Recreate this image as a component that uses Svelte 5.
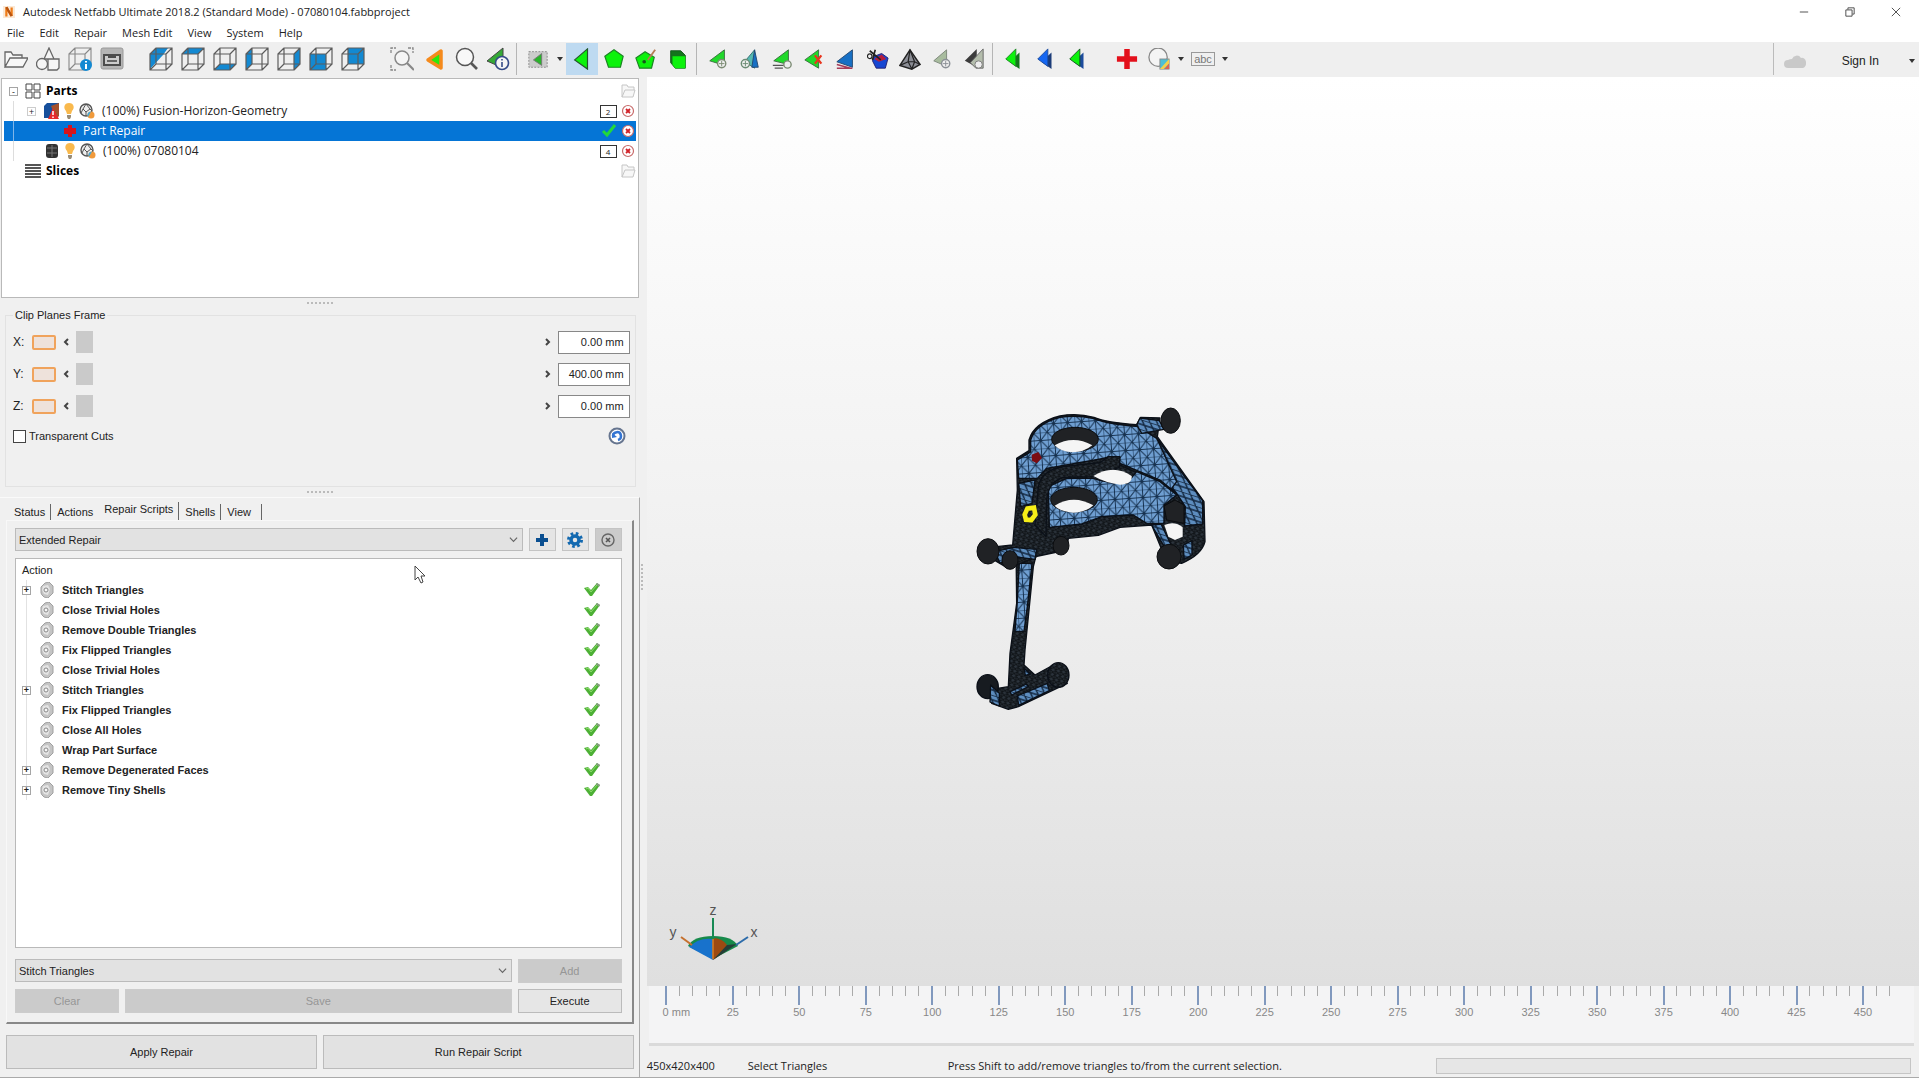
<script>
	let transparentCuts = false;
	let activeTab = "Repair Scripts";

	const menus = ["File", "Edit", "Repair", "Mesh Edit", "View", "System", "Help"];
	const tabs = ["Status", "Actions", "Repair Scripts", "Shells", "View"];

	// toolbar groups, left to right
	const toolbar = [
		["open", "shapes", "info-part", "save"],
		["cube-iso", "cube-top", "cube-bottom", "cube-left", "cube-right", "cube-front", "cube-back"],
		["zoom-fit", "zoom-tri", "zoom", "tri-info"],
		["select-mode"],
		["select-tri", "select-shell", "select-surface", "select-part"],
		["add-node", "add-tri", "add-edge", "remove-tri", "flip", "cut", "wire", "refine", "smooth"],
		["tri-green", "tri-blue", "tri-both"],
		["repair", "color"],
		["label"],
	];
	const withArrow = ["select-mode", "color", "label"];

	const cubeFaces = {
		"cube-iso": "1,22 1,7 7,1 19,1 14,8",
		"cube-top": "1,7 7,1 23,1 17,7",
		"cube-bottom": "1,23 7,17 23,17 17,23",
		"cube-left": "1,7 7,1 7,17 1,23",
		"cube-right": "17,7 23,1 23,17 17,23",
		"cube-front": "1,7 17,7 17,23 1,23",
		"cube-back": "7,1 23,1 23,17 7,17",
	};

	let planes = [
		{ axis: "X", value: "0.00 mm", pos: 0 },
		{ axis: "Y", value: "400.00 mm", pos: 0 },
		{ axis: "Z", value: "0.00 mm", pos: 0 },
	];

	const actions = [
		{ name: "Stitch Triangles", open: true },
		{ name: "Close Trivial Holes" },
		{ name: "Remove Double Triangles" },
		{ name: "Fix Flipped Triangles" },
		{ name: "Close Trivial Holes" },
		{ name: "Stitch Triangles", open: true },
		{ name: "Fix Flipped Triangles" },
		{ name: "Close All Holes" },
		{ name: "Wrap Part Surface" },
		{ name: "Remove Degenerated Faces", open: true },
		{ name: "Remove Tiny Shells", open: true },
	];

	const ticks = Array.from({ length: 93 }, (_, i) => i * 5);
</script>

{#snippet icon(name)}
	<svg class="icon" viewBox="0 0 24 24" aria-hidden="true">
		{#if cubeFaces[name]}
			<polygon points={cubeFaces[name]} fill="#1389d2" />
			<path d="M1 7H17V23H1ZM7 1H23V17H7ZM1 7L7 1M17 7L23 1M17 23L23 17M1 23L7 17" fill="none" stroke="#5c5c5c" stroke-width="1.2" />
		{:else if name === "open"}
			<path d="M1 20V5H7L9 8H18V11M1 20L6 11H24L19 20Z" fill="#f7f7f7" stroke="#666" stroke-width="1.3" />
		{:else if name === "shapes"}
			<path d="M13 1L18 12H8Z M12 12H23V21L21 23H12Z" fill="#f5f5f5" stroke="#666" stroke-width="1.3" />
			<circle cx="6" cy="17" r="5.5" fill="#f5f5f5" stroke="#666" stroke-width="1.3" />
		{:else if name === "info-part"}
			<path d="M1 7H17V23H1ZM7 1H23V17H7ZM1 7L7 1M17 7L23 1M17 23L23 17M1 23L7 17" fill="none" stroke="#888" stroke-width="1.1" />
			<circle cx="18" cy="18" r="6" fill="#1389d2" />
			<path d="M18 14V15.5M18 17V22" stroke="#fff" stroke-width="2" />
		{:else if name === "save"}
			<rect x="1" y="1" width="22" height="21" rx="2" fill="#b5b5b5" stroke="#999" />
			<rect x="3" y="7" width="18" height="12" fill="#4c4c4c" />
			<path d="M5 9H8V11H16V9H19V17H5Z" fill="#ccc" />
			<path d="M7 13H17V15H7Z" fill="#666" />
		{:else if name === "zoom-fit"}
			<path d="M1 6V1H6M18 1H23V6M1 18V23H6" fill="none" stroke="#888" stroke-width="1.3" stroke-dasharray="3 1" />
			<circle cx="12" cy="11" r="7" fill="#f5f5f5" stroke="#888" stroke-width="1.5" />
			<path d="M17 16L24 23" stroke="#888" stroke-width="2.2" />
		{:else if name === "zoom-tri"}
			<path d="M6 13L19 4V21Z" fill="#2be80b" stroke="#f58a1c" stroke-width="3.5" stroke-linejoin="round" />
		{:else if name === "zoom"}
			<circle cx="11" cy="10" r="8.5" fill="#f8f8f8" stroke="#555" stroke-width="1.5" />
			<path d="M17 16L23 22" stroke="#555" stroke-width="2.6" />
		{:else if name === "tri-info"}
			<path d="M1 14L17 1V21Z" fill="#35a936" stroke="#444" />
			<circle cx="16" cy="16" r="6.5" fill="#f5f5f5" stroke="#354b88" stroke-width="1.6" />
			<path d="M16 12V13.5M16 15V20" stroke="#354b88" stroke-width="1.6" />
		{:else if name === "select-mode"}
			<rect x="2" y="4" width="20" height="17" fill="#ccc" stroke="#888" stroke-dasharray="2 1.5" />
			<path d="M7 13L16 6V19Z" fill="#2ab42b" stroke="#777" />
		{:else if name === "select-tri"}
			<path d="M4 13L18 1V23Z" fill="#0cf20c" stroke="#24582a" stroke-width="1.3" />
		{:else if name === "select-shell"}
			<path d="M12 2L22 9L19 21H6L2 9Z" fill="#0cf20c" stroke="#1d8424" stroke-width="1.3" />
		{:else if name === "select-surface"}
			<path d="M11 4L21 10L18 22H5L1 11Z" fill="#0cf20c" stroke="#1d8424" stroke-width="1.3" />
			<circle cx="10" cy="15" r="2" fill="#14561c" />
			<path d="M14 13L22 2" stroke="#b77b54" stroke-width="2" />
		{:else if name === "select-part"}
			<path d="M4 3H15L20 8V22H9L4 16Z" fill="#14751c" stroke="#14561c" />
			<path d="M6 9H20V22H9L6 18Z" fill="#0cf20c" />
		{:else if name === "add-node"}
			<path d="M3 14L19 2V19Z" fill="#20d92a" stroke="#3b6d40" />
			<circle cx="16" cy="17" r="4.5" fill="#eee" stroke="#7b8b73" stroke-width="1.5" />
			<path d="M16 14V20M13 17H19" stroke="#7b8b73" />
		{:else if name === "add-tri"}
			<path d="M6 15L17 2V22Z" fill="#55b9b0" stroke="#356f74" />
			<path d="M17 2L21 21H14Z" fill="#1770c5" stroke="#24476f" />
			<circle cx="7" cy="17" r="4.5" fill="#eee" stroke="#6a8b73" stroke-width="1.5" />
			<path d="M7 14V20M4 17H10" stroke="#6a8b73" />
		{:else if name === "add-edge"}
			<path d="M3 14L19 2V18Z" fill="#20d92a" stroke="#3b6d40" />
			<path d="M2 19H14M4 22H13" stroke="#555" stroke-width="1.5" />
			<circle cx="18" cy="18" r="4" fill="#eee" stroke="#7b8b73" stroke-width="1.5" />
		{:else if name === "remove-tri"}
			<path d="M2 13L17 2V22Z" fill="#20d92a" stroke="#3b6d40" />
			<path d="M13 8L20 17M20 8L13 17" stroke="#e8341c" stroke-width="2.5" />
		{:else if name === "flip"}
			<path d="M2 15L19 2V21Z" fill="#1770c5" stroke="#24476f" />
			<path d="M2 18L17 22M2 22H19" stroke="#a63b58" stroke-width="1.6" />
		{:else if name === "cut"}
			<path d="M8 9L16 6L23 11L20 22H10L6 14Z" fill="#1646d2" stroke="#24206f" />
			<path d="M8 12L16 7L21 12L13 15Z" fill="#b51c3c" />
			<path d="M3 3L15 13M9 2L6 13" stroke="#222" stroke-width="1.8" />
			<circle cx="3" cy="9" r="2.5" fill="none" stroke="#222" stroke-width="1.3" />
		{:else if name === "wire"}
			<path d="M12 2L23 18L14 23L1 19Z" fill="#8b8d95" stroke="#222" stroke-width="1.6" />
			<path d="M12 2L10 15L14 23M12 2L17 15L10 15L1 19M17 15L23 18M17 15L14 23" fill="none" stroke="#222" stroke-width="1.3" />
		{:else if name === "refine"}
			<path d="M3 14L17 2V20Z" fill="#a8bc9e" stroke="#7c8779" />
			<circle cx="16" cy="17" r="4.5" fill="#eee" stroke="#8a8f96" stroke-width="1.5" />
			<path d="M16 14V20M13 17H19" stroke="#8a8f96" />
		{:else if name === "smooth"}
			<path d="M2 14L15 1V21Z" fill="#3c3c3c" />
			<path d="M8 16L22 1V22H14Z" fill="#b4bdac" stroke="#666" />
			<circle cx="17" cy="18" r="4" fill="#eee" stroke="#777" />
		{:else if name === "tri-green"}
			<path d="M7 15L18 5V23Z" fill="#14751c" />
			<path d="M3 12L14 1V20Z" fill="#0cf20c" stroke="#1d8424" />
		{:else if name === "tri-blue"}
			<path d="M7 15L18 5V23Z" fill="#1c3c79" />
			<path d="M3 12L14 1V20Z" fill="#1667f2" stroke="#1c4b9c" />
		{:else if name === "tri-both"}
			<path d="M7 15L18 5V23Z" fill="#1c4b9c" />
			<path d="M3 12L14 1V20Z" fill="#0cf20c" stroke="#14561c" />
		{:else if name === "repair"}
			<path d="M9 1H15V9H23V15H15V23H9V15H1V9H9Z" fill="#e3101b" />
		{:else if name === "color"}
			<circle cx="11" cy="10" r="10" fill="#f4f4f4" stroke="#888" stroke-width="1.4" />
			<rect x="13" y="12" width="10" height="11" fill="#4bbfd5" stroke="#888" />
			<path d="M13 23L23 12V17L17 23Z" fill="#f4cf4a" />
			<path d="M23 17V23H18Z" fill="#e0604f" />
		{/if}
	</svg>
{/snippet}

{#snippet folder()}
	<svg class="icon16" viewBox="0 0 16 16" aria-hidden="true">
		<path d="M2 14V2H7L8 4H14V7M2 14L5 7H15L13 14Z" fill="#f7f7f7" stroke="#c6c6c6" />
	</svg>
{/snippet}

{#snippet closeMark()}
	<svg class="icon16" viewBox="0 0 16 16" aria-hidden="true">
		<circle cx="8" cy="8" r="5.5" fill="#fff" stroke="#c76a6a" stroke-width="1.2" />
		<path d="M6 6L10 10M10 6L6 10" stroke="#d2232a" stroke-width="1.8" />
	</svg>
{/snippet}

{#snippet bulbAndGlobe()}
	<svg class="icon16" viewBox="0 0 16 16" aria-hidden="true">
		<path d="M8 0C3 0 2 5 5 8L6 11H10L11 8C14 5 13 0 8 0Z" fill="#f9b94d" />
		<path d="M6 12H10V14L9 16H7L6 14Z" fill="#998d78" />
	</svg>
	<svg class="icon16" viewBox="0 0 16 16" aria-hidden="true">
		<circle cx="7" cy="7" r="6" fill="#eee" stroke="#555" stroke-width="1.4" />
		<path d="M7 1L4 6L7 9L11 6ZM4 6L2 10M11 6L13 8M7 9V13" fill="none" stroke="#555" />
		<circle cx="12" cy="12" r="3.5" fill="#f09a3c" />
		<path d="M12 8.5A3.5 3.5 0 0 0 9 14Z" fill="#43a7d8" />
	</svg>
{/snippet}

{#snippet chevron()}
	<svg class="chevron" viewBox="0 0 10 10" aria-hidden="true">
		<path d="M1 3L5 7L9 3" fill="none" stroke="#666" stroke-width="1.3" />
	</svg>
{/snippet}

<div class="app">
	<header class="titlebar">
		<svg class="logo" viewBox="0 0 16 16" aria-hidden="true">
			<rect width="16" height="16" fill="#fbe9d6" />
			<path d="M3 14V2L6 1L10 9V2H13V13L10 14L6 7V14Z" fill="#ef7d1a" />
			<path d="M3 2L6 1L13 13L10 14Z" fill="#b95410" />
		</svg>
		<h1>Autodesk Netfabb Ultimate 2018.2 (Standard Mode) - 07080104.fabbproject</h1>
		<div class="window-buttons">
			<button aria-label="Minimize"><svg viewBox="0 0 12 12"><path d="M1 6H11" /></svg></button>
			<button aria-label="Restore"><svg viewBox="0 0 12 12"><path d="M1 3.5H8.5V11H1ZM3.5 3V1H11V8.5H9" /></svg></button>
			<button aria-label="Close"><svg viewBox="0 0 12 12"><path d="M1 1L11 11M11 1L1 11" /></svg></button>
		</div>
	</header>

	<nav class="menubar">
		{#each menus as menu}
			<button>{menu}</button>
		{/each}
	</nav>

	<div class="toolbar">
		{#each toolbar as group, g}
			<div class="group" class:ruled={[3, 5, 6].includes(g)} class:spaced={[1, 2, 7].includes(g)}>
				{#each group as name}
					<button class="tool" class:selected={name === "select-tri"} aria-label={name}>
						{#if name === "label"}
							<span class="abc">abc</span>
						{:else}
							{@render icon(name)}
						{/if}
					</button>
					{#if withArrow.includes(name)}
						<button class="arrow" aria-label="{name} options"></button>
					{/if}
				{/each}
			</div>
		{/each}
		<div class="account">
			<svg class="cloud" viewBox="0 0 22 14" aria-hidden="true">
				<path d="M4 14A4 4 0 0 1 4 6Q6 5 8 5A5 5 0 0 1 17 4A4 5 0 0 1 19 14Z" fill="#c9c9c9" />
			</svg>
			<button class="signin">Sign In</button>
			<button class="arrow" aria-label="Account options"></button>
		</div>
	</div>

	<main>
		<aside>
			<ul class="tree">
				<li>
					<span class="box">-</span>
					<svg class="icon16" viewBox="0 0 16 16" aria-hidden="true">
						<path d="M1 1H7V7H1ZM9 1H15V7H9ZM1 9H7V15H1ZM9 9H15V15H9Z" fill="#fff" stroke="#444" />
					</svg>
					<b>Parts</b>
					<span class="row-end">{@render folder()}</span>
				</li>
				<li class="child">
					<span class="box faint">+</span>
					<svg class="icon16" viewBox="0 0 16 16" aria-hidden="true">
						<path d="M1 3L4 0H16V13L13 15H1Z" fill="#17509c" />
						<path d="M8 3L16 0V13L13 15Z" fill="#a4512b" />
						<path d="M10 5L16 16H5Z" fill="#e52b2b" />
						<path d="M10 8V12M10 13.5V15" stroke="#fff" stroke-width="1.5" />
					</svg>
					{@render bulbAndGlobe()}
					<span class="name">(100%) Fusion-Horizon-Geometry</span>
					<span class="row-end"><span class="count">2</span>{@render closeMark()}</span>
				</li>
				<li class="grandchild selected">
					<svg class="icon16" viewBox="0 0 16 16" aria-hidden="true">
						<path d="M6 2H10V5H14V11H10V14H6V11H2V5H6Z" fill="#d8131c" />
					</svg>
					<span>Part Repair</span>
					<span class="row-end">
						<svg class="icon16" viewBox="0 0 16 16" aria-hidden="true">
							<path d="M2 8L6 12L14 2" fill="none" stroke="#22d83c" stroke-width="3" />
						</svg>
						{@render closeMark()}
					</span>
				</li>
				<li class="child leaf">
					<svg class="icon16" viewBox="0 0 16 16" aria-hidden="true">
						<rect x="2" y="1" width="12" height="14" rx="3" fill="#333" />
						<path d="M3 5H13M3 10H13M8 2V14" stroke="#777" />
					</svg>
					{@render bulbAndGlobe()}
					<span class="name">(100%) 07080104</span>
					<span class="row-end"><span class="count">4</span>{@render closeMark()}</span>
				</li>
				<li class="slices">
					<svg class="icon16" viewBox="0 0 16 16" aria-hidden="true">
						<path d="M0 2H16M0 5H16M0 8H16M0 11H16M0 14H16" stroke="#555" stroke-width="2" />
					</svg>
					<b>Slices</b>
					<span class="row-end">{@render folder()}</span>
				</li>
			</ul>

			<div class="grip"></div>

			<fieldset class="clip">
				<legend>Clip Planes Frame</legend>
				{#each planes as plane}
					<div class="plane">
						<label for="plane-{plane.axis}">{plane.axis}:</label>
						<button class="swatch" aria-label="Toggle {plane.axis} plane"></button>
						<button class="step" aria-label="Less"><svg viewBox="0 0 6 8"><path d="M5 1L2 4L5 7" /></svg></button>
						<input type="range" min="0" max="450" bind:value={plane.pos} aria-label="{plane.axis} position" />
						<button class="step" aria-label="More"><svg viewBox="0 0 6 8"><path d="M1 1L4 4L1 7" /></svg></button>
						<input class="value" id="plane-{plane.axis}" type="text" bind:value={plane.value} />
					</div>
				{/each}
				<div class="cuts">
					<label><input type="checkbox" bind:checked={transparentCuts} />Transparent Cuts</label>
					<button class="reset" aria-label="Reset">
						<svg viewBox="0 0 18 18">
							<circle cx="9" cy="9" r="7.5" fill="#fff" stroke="#66758f" stroke-width="2" />
							<path d="M5 9A4 4 0 1 1 10 13" fill="none" stroke="#3475d3" stroke-width="2.5" />
							<path d="M4 6L4 11L9 10Z" fill="#3475d3" />
						</svg>
					</button>
				</div>
			</fieldset>

			<div class="grip"></div>

			<div class="dock">
				<div class="tabs" role="tablist">
					{#each tabs as tab}
						<button role="tab" class:active={tab === activeTab} aria-selected={tab === activeTab} on:click={() => (activeTab = tab)}>{tab}</button>
					{/each}
				</div>

				<section class="scripts">
					<div class="script-row">
						<div class="combo">
							<select aria-label="Repair script"><option>Extended Repair</option></select>
							{@render chevron()}
						</div>
						<button class="square" aria-label="Add script">
							<svg viewBox="0 0 16 16"><path d="M6 2H10V6H14V10H10V14H6V10H2V6H6Z" fill="#0a4f91" /></svg>
						</button>
						<button class="square" aria-label="Script settings">
							<svg viewBox="0 0 16 16">
								<circle cx="8" cy="8" r="6.5" fill="none" stroke="#1369b0" stroke-width="3" stroke-dasharray="2.6 2.5" />
								<circle cx="8" cy="8" r="4" fill="none" stroke="#1369b0" stroke-width="3.5" />
							</svg>
						</button>
						<button class="square off" aria-label="Delete script">
							<svg viewBox="0 0 16 16">
								<circle cx="8" cy="8" r="6" fill="none" stroke="#666" stroke-width="1.4" />
								<path d="M6 6L10 10M10 6L6 10" stroke="#555" stroke-width="1.6" />
							</svg>
						</button>
					</div>

					<div class="list">
						<table>
							<thead>
								<tr><th colspan="2">Action</th></tr>
							</thead>
							<tbody>
								{#each actions as action}
									<tr>
										<td>
											<div class="action">
												<span class="branch">{#if action.open}<span class="box">+</span>{/if}</span>
												<svg class="icon16" viewBox="0 0 16 16" aria-hidden="true">
													<path d="M6 1L10 0L12 2L14 4V11L12 13L9 16L5 15L3 13L2 11V5L4 3Z" fill="#c4c4c4" stroke="#a0a0a0" />
													<path d="M4 4L9 3L11 7L9 13L5 12L3 8Z" fill="#e4e4e4" />
													<circle cx="7" cy="8" r="2" fill="#f8f8f8" stroke="#888" />
												</svg>
												{action.name}
											</div>
										</td>
										<td class="state">
											<svg class="icon16" viewBox="0 0 16 16" role="img" aria-label="enabled">
												<path d="M0 6L4 5L7 8L13 1L16 3L8 14H6Z" fill="#4db035" />
												<path d="M2 7L4 6L7 10L13 3" fill="none" stroke="#8cdc6c" />
												<path d="M12 2L13 1L16 3L15 5Z" fill="#8b9a88" />
											</svg>
										</td>
									</tr>
								{/each}
							</tbody>
						</table>
					</div>

					<div class="commands">
						<div class="combo wide">
							<select aria-label="Action to add"><option>Stitch Triangles</option></select>
							{@render chevron()}
						</div>
						<button disabled>Add</button>
						<button disabled>Clear</button>
						<button disabled>Save</button>
						<button>Execute</button>
					</div>
				</section>

				<div class="apply">
					<button>Apply Repair</button>
					<button>Run Repair Script</button>
				</div>
			</div>
		</aside>

		<div class="workspace">
			<div class="splitter"></div>

			<section class="view">
				<div class="canvas">
					<svg class="model" viewBox="0 0 780 1020" role="img" aria-label="Part mesh">
						<defs>
							<pattern id="mesh" width="42" height="48" patternUnits="userSpaceOnUse" patternTransform="rotate(-4)">
								<rect width="42" height="48" fill="#6f9fd2" />
								<path d="M0 0H42M0 24H42M0 0L42 48M0 48L42 0M21 0V48M0 0V48" fill="none" stroke="#16314f" stroke-width="3" />
							</pattern>
							<pattern id="dense" width="16" height="14" patternUnits="userSpaceOnUse" patternTransform="rotate(12)">
								<rect width="16" height="14" fill="#2c343d" />
								<path d="M0 0L16 14M0 14L16 0M8 0V14" fill="none" stroke="#101418" stroke-width="3" />
							</pattern>
							<pattern id="strip" width="26" height="28" patternUnits="userSpaceOnUse" patternTransform="rotate(18)">
								<rect width="26" height="28" fill="#5d8dbf" />
								<path d="M0 0H26M0 0L26 28M0 14H26" fill="none" stroke="#10233a" stroke-width="4" />
							</pattern>
						</defs>

						<!-- lower leg and foot -->
						<g stroke="#0b1018" stroke-width="4" stroke-linejoin="round">
							<path d="M168 470H235L220 530L195 780L192 825L225 855L280 825L322 880L175 950L145 958L95 940L85 900L145 890L150 790L170 640Z" fill="url(#dense)" />
							<ellipse cx="83" cy="890" rx="32" ry="36" fill="#171b20" />
							<ellipse cx="295" cy="855" rx="32" ry="37" fill="url(#dense)" />
							<path d="M178 520H216L202 650L192 724H165L172 630Z" fill="url(#mesh)" />
							<path d="M150 905L200 882L205 890L155 915ZM172 918L262 880L268 902L176 946ZM92 885L118 910V948L90 936ZM192 835L212 852L196 856Z" fill="url(#strip)" />
						</g>

						<!-- mounting plates -->
						<g stroke="#0b1018" stroke-width="4" stroke-linejoin="round">
							<path d="M170 205L207 182V150Q222 98 300 78Q350 68 402 82Q440 98 530 104L542 82L600 84L592 140L732 335L735 455Q725 495 665 520L620 515L575 405L480 412L415 436L325 445L320 480L235 498L145 535L85 500L110 470L158 465L172 300Z" fill="url(#dense)" />
							<path d="M172 210L212 186V150Q226 102 300 82Q350 74 402 86Q440 102 535 110L590 145L685 275L728 332V375L675 355L655 315L600 270L480 220Q470 190 430 205L260 235L232 265H176Z" fill="url(#mesh)" />
							<path d="M590 145L685 275L728 332V402L674 408L676 350L650 310L635 295L650 275Z" fill="url(#strip)" />
							<path d="M480 225L640 300" fill="none" />
							<path d="M265 290L320 265L400 265Q440 280 500 280L530 245L600 275L650 315L612 345V400L560 400L520 375L425 380L365 402L268 412Z" fill="url(#mesh)" />
							<path d="M176 280L225 270L216 340L182 350Z" fill="url(#strip)" />
							<path d="M225 405L235 290Q245 240 310 230L420 218L445 200L480 200L478 232L400 260L310 262Q265 275 260 330L258 440Z" fill="url(#dense)" />
							<path d="M575 405L603 402L640 478L620 482Z" fill="url(#strip)" />
							<path d="M105 485L160 472L230 478L225 508L160 500L120 520Z" fill="url(#strip)" />
							<path d="M540 84L598 92L612 118L545 130L530 105Z" fill="url(#strip)" />
							<path d="M670 465L696 452V495L672 508Z" fill="url(#strip)" />
						</g>

						<g fill="#202225" stroke="#0b0d10" stroke-width="3">
							<ellipse cx="345" cy="148" rx="70" ry="36" />
							<ellipse cx="342" cy="329" rx="70" ry="37" />
							<path d="M612 348L645 330L672 345V400L620 390Z" />
							<ellipse cx="632" cy="92" rx="29" ry="38" />
							<ellipse cx="84" cy="484" rx="33" ry="38" />
							<ellipse cx="627" cy="500" rx="36" ry="37" />
							<ellipse cx="303" cy="467" rx="24" ry="28" />
							<ellipse cx="150" cy="510" rx="24" ry="28" />
						</g>
						<g fill="#f5f5f5">
							<path d="M284 166Q340 134 397 166Q370 188 335 187Q300 184 284 166Z" />
							<path d="M284 347Q340 312 400 346Q380 366 340 368Q300 365 284 347Z" />
							<path d="M400 258Q460 220 515 258Q518 282 480 284Q440 280 400 258Z" />
							<path d="M613 405Q645 392 668 412V440L645 450L625 440Z" />
						</g>
						<path d="M215 194L235 186L246 204L230 220L216 212Z" fill="#7c0c12" />
						<path d="M202 356L222 353L226 374L214 390L198 389L194 374Z" fill="none" stroke="#f6ee18" stroke-width="14" />
					</svg>

					<svg class="triad" viewBox="0 0 94 64" role="img" aria-label="Axes">
						<path d="M19 46Q24 36 44 36Q64 36 69 46L44 59Z" fill="#168a4b" />
						<path d="M20 47Q30 37 44 39V60Z" fill="#1872cc" />
						<path d="M44 38Q53 38 58 45L57 51L44 60Z" fill="#9c4a12" />
						<path d="M58 45L68 44L44 60Z" fill="#233f39" />
						<path d="M44 18V40" stroke="#188a55" stroke-width="2" />
						<path d="M44 39V59" stroke="#dc7d1c" stroke-width="1.5" />
						<path d="M12 37L23 45" stroke="#c5702d" stroke-width="2" />
						<path d="M79 37L67 45" stroke="#2d6caa" stroke-width="2" />
						<text x="44" y="15">z</text>
						<text x="4" y="37">y</text>
						<text x="85" y="37">x</text>
					</svg>
				</div>

				<div class="ruler">
					{#each ticks as tick}
						<div class="tick" class:major={tick % 25 === 0}>
							{#if tick === 0}
								<span class="origin">0 mm</span>
							{:else if tick % 25 === 0}
								<span>{tick}</span>
							{/if}
						</div>
					{/each}
				</div>

				<footer>
					<span class="size">450x420x400</span>
					<span class="mode">Select Triangles</span>
					<span class="hint">Press Shift to add/remove triangles to/from the current selection.</span>
					<div class="progress"></div>
				</footer>
			</section>
		</div>
	</main>

	<svg class="cursor" viewBox="0 0 12 19" aria-hidden="true">
		<path d="M1 1V15L4 12L7 18L9 17L7 11H11Z" fill="#fff" stroke="#444" />
	</svg>
</div>

<style>
	:global(body) {
		margin: 0;
		background: #f0f0f0;
	}

	.app {
		display: flex;
		flex-direction: column;
		position: relative;
		min-height: 100vh;
		box-sizing: border-box;
		border-bottom: 1px solid #aaa;
		font-family: "Liberation Sans", Arial, sans-serif;
		font-size: 12px;
		color: #222;
	}

	.app :global(*) {
		box-sizing: border-box;
	}

	button,
	select,
	input {
		margin: 0;
		padding: 0;
		border: 0;
		border-radius: 0;
		background: none;
		font: inherit;
		color: inherit;
	}

	svg {
		display: block;
		flex: none;
	}

	.titlebar,
	.menubar,
	.tree,
	footer {
		font-family: "Open Sans", "Segoe UI", sans-serif;
	}

	.titlebar {
		display: flex;
		align-items: center;
		gap: 8px;
		height: 24px;
		padding-left: 3px;
		background: #fff;
	}

	.logo {
		width: 12px;
		height: 14px;
	}

	h1 {
		margin: 0;
		font-size: 11px;
		font-weight: 400;
		line-height: 16px;
	}

	.window-buttons {
		display: flex;
		margin-left: auto;
	}

	.window-buttons button {
		display: grid;
		place-items: center;
		width: 46px;
		height: 20px;
	}

	.window-buttons svg {
		width: 10px;
		height: 10px;
		fill: none;
		stroke: #333;
	}

	.menubar {
		display: flex;
		gap: 15px;
		height: 18px;
		padding-left: 7px;
		background: #fff;
		font-size: 11px;
		line-height: 18px;
	}

	.toolbar {
		display: flex;
		align-items: center;
		height: 35px;
		padding-bottom: 1px;
		background: #efefef;
	}

	.group {
		display: flex;
		align-items: center;
		height: 32px;
	}

	.spaced {
		margin-left: 17px;
	}

	.ruled {
		margin-left: 2px;
		padding-left: 5px;
		border-left: 1px solid #b5b5b5;
	}

	.tool {
		display: grid;
		place-items: center;
		width: 32px;
		height: 32px;
	}

	.tool.selected {
		background: #bedaf1;
	}

	.icon {
		width: 24px;
		height: 24px;
	}

	.group:nth-child(n + 4) .icon {
		width: 22px;
		height: 22px;
	}

	.arrow {
		width: 12px;
		height: 32px;
	}

	.arrow::after {
		content: "";
		display: block;
		width: 0;
		margin: 0 auto;
		border: 3px solid transparent;
		border-top: 4px solid #333;
		border-bottom: 0;
	}

	.abc {
		width: 24px;
		border: 1px solid #999;
		font-size: 11px;
		line-height: 12px;
		color: #777;
	}

	.account {
		display: flex;
		align-items: center;
		height: 32px;
		margin-left: auto;
		padding: 3px 1px 0 10px;
		border-left: 1px solid #bbb;
	}

	.cloud {
		width: 22px;
		height: 14px;
	}

	.signin {
		margin: 0 27px 0 36px;
	}

	main {
		display: grid;
		grid-template-columns: minmax(0, 1fr) minmax(0, 2fr);
		flex: 1;
	}

	aside {
		display: flex;
		flex-direction: column;
		padding-top: 1px;
	}

	.tree {
		height: 220px;
		margin: 0 1px;
		padding: 2px 2px 0;
		border: 1px solid #b9b9b9;
		background: #fff;
		list-style: none;
	}

	.tree li {
		display: flex;
		align-items: center;
		gap: 5px;
		height: 20px;
		padding: 0 0 0 5px;
		line-height: 20px;
	}

	.tree b {
		color: #000;
	}

	.tree .child {
		gap: 2px;
		padding-left: 23px;
		background: linear-gradient(#ddd, #ddd) 9px 0 / 1px 100% no-repeat;
	}

	.tree .leaf {
		padding-left: 40px;
	}

	.tree .grandchild {
		padding-left: 58px;
	}

	.tree .slices {
		padding-left: 21px;
	}

	.tree .selected {
		background: linear-gradient(#7fb5e8, #7fb5e8) 9px 0 / 1px 100% no-repeat #0575d6;
		color: #fff;
	}

	.name {
		margin-left: 5px;
	}

	.row-end {
		display: flex;
		align-items: center;
		gap: 3px;
		margin-left: auto;
	}

	.icon16 {
		width: 16px;
		height: 16px;
	}

	.box {
		width: 9px;
		height: 9px;
		border: 1px solid #a5a5a5;
		background: #fff;
		font-size: 9px;
		line-height: 7px;
		text-align: center;
		color: #222;
	}

	.faint {
		border-color: #ccc;
	}

	.tree .box {
		margin-right: 5px;
	}

	.tree li:first-child .box {
		margin-right: 2px;
	}

	.count {
		width: 17px;
		height: 13px;
		border: 1px solid #333;
		font-size: 8px;
		line-height: 11px;
		text-align: center;
	}

	.grip {
		height: 10px;
		padding: 2px calc(50% - 14px);
		background: radial-gradient(circle, #bbb 1px, transparent 1px) center / 4px 4px repeat-x;
		background-clip: content-box;
	}

	.clip {
		height: 179px;
		margin: 0 4px 0 5px;
		padding: 4px 5px 0 7px;
		border: 1px solid #e2e2e2;
	}

	legend {
		padding: 0 2px;
		font-size: 11px;
		line-height: 14px;
	}

	.plane {
		display: flex;
		align-items: center;
		height: 32px;
	}

	.plane label {
		width: 19px;
	}

	.swatch {
		width: 24px;
		height: 15px;
		border: 2px solid #f0a35c;
		border-radius: 2px;
		background: #eee2db;
	}

	.step {
		width: 20px;
		height: 22px;
	}

	.step svg {
		width: 6px;
		height: 8px;
		margin: 0 auto;
		fill: none;
		stroke: #444;
		stroke-width: 2;
	}

	.plane input[type="range"] {
		flex: 1;
		min-width: 0;
		height: 22px;
		appearance: none;
	}

	.plane input[type="range"]::-webkit-slider-thumb {
		appearance: none;
		width: 17px;
		height: 22px;
		background: #cacaca;
	}

	.value {
		width: 72px;
		height: 23px;
		padding-right: 5px;
		border: 1px solid #888;
		background: #fff;
		font-size: 11px;
		text-align: right;
	}

	.cuts {
		display: flex;
		align-items: center;
		justify-content: space-between;
		height: 28px;
		padding-right: 4px;
		font-size: 11px;
	}

	.cuts label {
		display: flex;
		align-items: center;
		gap: 3px;
	}

	.cuts input {
		appearance: none;
		width: 13px;
		height: 13px;
		border: 1px solid #444;
		background: #fff;
	}

	.cuts input:checked {
		background: #0575d6;
	}

	.reset svg {
		width: 18px;
		height: 18px;
	}

	.dock {
		display: flex;
		flex-direction: column;
		flex: 1;
		padding: 4px 5px 8px 6px;
		border-top: 1px solid #fafafa;
		border-right: 1px solid #aaa;
	}

	.tabs {
		display: flex;
		align-items: flex-end;
		height: 18px;
		padding-left: 2px;
		font-size: 11px;
	}

	.tabs button {
		height: 16px;
		padding: 0 5px 0 6px;
		border-right: 1px solid #666;
	}

	.tabs button:nth-child(2) {
		border-right: 0;
	}

	.tabs .active {
		height: 18px;
		padding-bottom: 4px;
	}

	.tabs button:last-child {
		padding-right: 10px;
	}

	.scripts {
		display: flex;
		flex-direction: column;
		flex: 1;
		padding: 7px 10px 9px 8px;
		border: 1px solid #f8f8f8;
		border-right: 2px solid #888;
		border-bottom: 2px solid #888;
	}

	.script-row {
		display: flex;
		gap: 6px;
		margin-bottom: 7px;
	}

	.combo {
		display: grid;
		flex: 1;
		align-items: center;
		height: 23px;
		border: 1px solid #bbb;
		background: #e2e2e2;
		font-size: 11px;
	}

	.combo select {
		grid-area: 1 / 1;
		height: 21px;
		padding-left: 3px;
		appearance: none;
	}

	.chevron {
		grid-area: 1 / 1;
		justify-self: end;
		width: 9px;
		height: 9px;
		margin-right: 4px;
		pointer-events: none;
	}

	.square {
		display: grid;
		place-items: center;
		width: 27px;
		height: 23px;
		border: 1px solid #c4c4c4;
		background: #e5e5e5;
	}

	.square svg {
		width: 16px;
		height: 16px;
	}

	.square.off {
		background: #cbcbcb;
	}

	.list {
		flex: 1;
		border: 1px solid #b9b9b9;
		background: #fff;
	}

	table {
		width: 100%;
		border-collapse: collapse;
	}

	th {
		height: 21px;
		padding: 0 0 0 6px;
		font-size: 11px;
		font-weight: 400;
		text-align: left;
	}

	td {
		height: 20px;
		padding: 0;
		font-size: 11px;
		font-weight: 700;
	}

	.action {
		display: flex;
		align-items: center;
		gap: 7px;
		height: 20px;
		padding-left: 5px;
	}

	.branch {
		display: grid;
		place-items: center;
		width: 11px;
		height: 20px;
		background: linear-gradient(#e2e2e2, #e2e2e2) center / 1px 100% no-repeat;
	}

	.state {
		width: 37px;
	}

	.commands {
		display: grid;
		grid-template-columns: 104px 1fr 104px;
		gap: 6px;
		margin-top: 11px;
		font-size: 11px;
	}

	.wide {
		grid-column: span 2;
	}

	.commands button,
	.apply button {
		height: 24px;
		border: 1px solid #bbb;
		background: #e6e6e6;
	}

	.commands button:disabled {
		border-color: #ccc;
		background: #cbcbcb;
		color: #969696;
	}

	.apply {
		display: grid;
		grid-template-columns: 1fr 1fr;
		gap: 6px;
		margin-top: 11px;
		font-size: 11px;
	}

	.apply button {
		height: 34px;
		background: #e2e2e2;
	}

	.workspace {
		display: flex;
	}

	.splitter {
		display: flex;
		align-items: center;
		width: 7px;
	}

	.splitter::before {
		content: "";
		width: 4px;
		height: 28px;
		background: radial-gradient(circle, #bbb 1px, transparent 1px) center / 4px 4px;
	}

	.view {
		display: flex;
		flex-direction: column;
		flex: 1;
		min-width: 0;
	}

	.canvas {
		position: relative;
		flex: 1;
		background: linear-gradient(#fff, #f1f1f1 50%, #dfdfdf);
	}

	.model {
		position: absolute;
		top: 313px;
		left: 313px;
		width: 260px;
		height: 340px;
	}

	.triad {
		position: absolute;
		bottom: 22px;
		left: 22px;
		width: 94px;
		height: 64px;
		font-size: 14px;
		text-anchor: middle;
		fill: #555;
	}

	.ruler {
		display: flex;
		height: 60px;
		margin: 0 5px 0 2px;
		padding: 0 18px 0 11px;
		border-bottom: 3px solid #dadada;
		background: #f4f4f5;
	}

	.tick {
		display: flex;
		flex: 1;
		flex-direction: column;
		align-items: center;
		width: 0;
		font-size: 11px;
		color: #888;
	}

	.tick::before {
		content: "";
		flex: none;
		width: 1px;
		height: 10px;
		background: #aaa;
	}

	.tick.major::before {
		width: 2px;
		height: 19px;
		background: #8199be;
	}

	.tick span {
		line-height: 14px;
		white-space: nowrap;
	}

	.tick .origin {
		padding-left: 20px;
	}

	footer {
		display: flex;
		align-items: center;
		height: 31px;
		padding: 8px 8px 0 0;
		font-size: 11px;
		white-space: nowrap;
	}

	.size {
		width: 101px;
	}

	.mode {
		width: 200px;
	}

	.progress {
		width: 475px;
		height: 16px;
		margin-left: auto;
		border: 1px solid #c5c5c5;
		background: #e6e6e6;
	}

	.cursor {
		position: absolute;
		top: 565px;
		left: 414px;
		width: 12px;
		height: 19px;
	}
</style>
